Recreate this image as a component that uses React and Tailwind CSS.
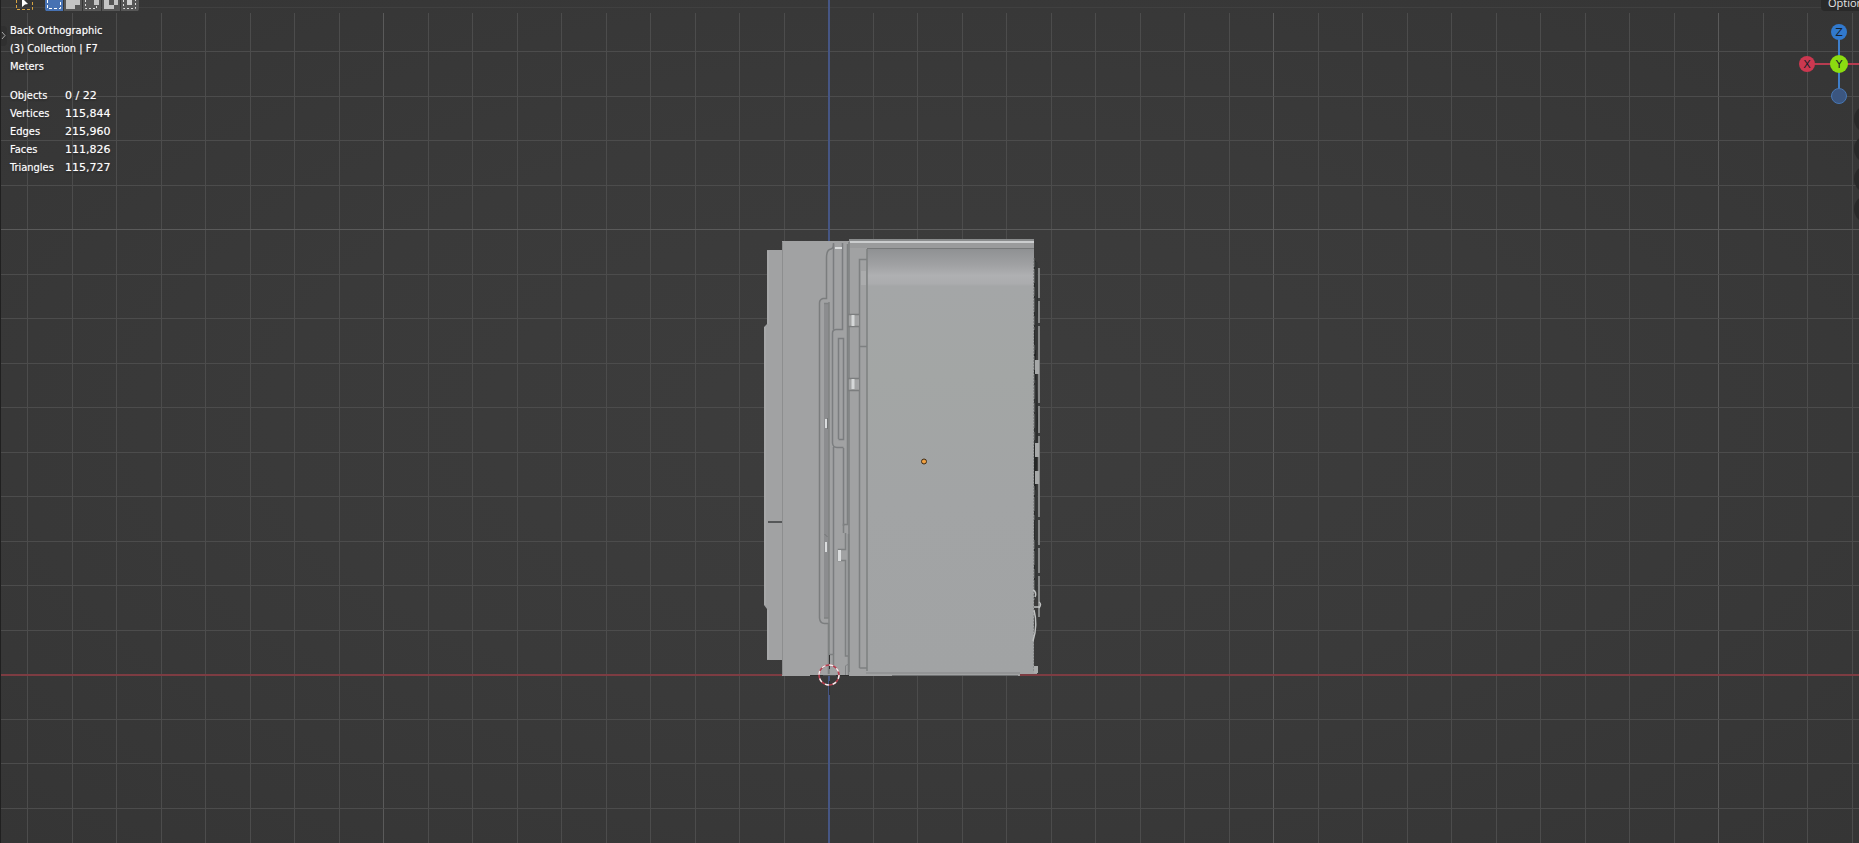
const S = 44.5;
const OX = 828.7;
const OY = 674.7;

const range = (a, b) => Array.from({ length: b - a + 1 }, (_, i) => a + i);

function Grid() {
  return (
    <g strokeWidth="1">
      <g shapeRendering="crispEdges">
        {range(-18, 60).map((i) => (
          <line key={"v" + i} x1={OX + i * S} x2={OX + i * S} y1="13" y2="2400" stroke={i % 10 === 0 ? "#5a5a5a" : "#4c4c4c"} />
        ))}
        {range(-14, 40).map((i) => (
          <line key={"h" + i} x1="0" x2="4000" y1={OY + i * S} y2={OY + i * S} stroke={i % 10 === 0 ? "#5a5a5a" : "#4c4c4c"} />
        ))}
        <line x1="0" x2="4000" y1="7.500" y2="7.500" stroke="#404040" />
      </g>
      <line x1="0" x2="4000" y1="675" y2="675" stroke="#7d3c42" strokeWidth="2" />
      <line x1="829" x2="829" y1="0" y2="2400" stroke="#465684" strokeWidth="2" />
    </g>
  );
}

function Model() {
  return (
    <g>
      {/* rear handle rail */}
      <path d="M1033 256L1036 262L1038 300L1036 360L1038 420L1036 500L1037 570L1034 600H1033Z" fill="#252727" />
      <path d="M1036 262V350M1035 380V445M1036 490V590" stroke="#343636" strokeWidth="3" fill="none" />
      <path d="M1034 258V330M1034 345V440M1034 486V520M1034 540V600" stroke="#7a7c7c" strokeDasharray="9 2 14 4" />
      <path d="M1039 268V617" stroke="#858787" strokeWidth="2" />
      <path d="M1039 298v3M1039 323v3M1039 403v3M1039 433v3M1039 517v3M1039 545v3M1039 573v3" stroke="#3b3d3d" strokeWidth="2" />
      <path d="M1035 360h4v14h-4zM1035 443h4v14h-4zM1035 471h4v13h-4z" fill="#a7a9a9" />

      {/* body silhouette */}
      <path d="M764 327L767 324V250H782V241H849V239H1034V671H1037V674H1020V676H782V660H767V609L764 605Z" fill="#a1a2a3" />
      <path d="M765 327V605M768 251V324M768 610V659" stroke="#adaeaf" fill="none" />
      <path d="M782.500 242V675" stroke="#8d8e8f" />

      {/* main panel */}
      <rect x="867" y="248" width="167" height="424" fill="url(#panel)" />
      <rect x="849" y="239" width="185" height="9" fill="#9a9b9c" />
      <path d="M849 240H1034" stroke="#8a8c8d" strokeWidth="2" />
      <path d="M850 242H1034" stroke="#cbcdce" strokeWidth="2" />
      <path d="M867 248.500H1034" stroke="#77797a" />
      <path d="M1033.500 258V672" stroke="#8a8c8d" strokeDasharray="2 1" />
      <g strokeWidth="1.500" stroke="#7e8081" fill="none">
        <path d="M867 249V671" />
        <path d="M859.500 668V259.500H867M859.500 668H867M860 346.500H867" />
      </g>
      <rect x="861" y="271" width="5" height="14" fill="#abacad" />
      <path d="M849 242V672" stroke="#868889" strokeWidth="2" fill="none" />
      <path d="M859 314.500H848V326.500H859M859 378.500H848V390.500H859" fill="#a3a4a5" stroke="#7b7d7e" strokeWidth="1.500" />
      <path d="M851.500 315h3v11h-3zM851.500 379h3v10h-3z" fill="#d5d7d8" />

      {/* pipes and seams */}
      <g strokeWidth="1.500">
        <path d="M833.500 244.500Q834 248.500 829.500 249.500Q826.500 251 826.500 258V298.500H823Q819.500 299.500 819.500 303V618Q820 623.500 824.500 623.500H828.500V674" stroke="#7b7d7e" fill="none" />
        <rect x="824" y="304" width="5" height="314" fill="#8c8d8f" />
        <path d="M829 302V674M824 303.500H829M824 618H829" stroke="#808283" fill="none" />
        <path d="M833.500 243V329.500M842.500 243V329.500H836Q832.500 330 832.500 333V443Q833 447.500 837 447.500H843.500M833.500 447V654M838.500 439V338.500H843.500V439.500H838.500M843.500 448V526" stroke="#7b7d7f" fill="none" />
        <path d="M847.500 244V524.500H843.500V533M848.500 534V675M845.500 533V549.500H838.500V560.500H845.500V656H848M829 654.500H833.500V665" stroke="#7e8081" fill="none" />
      </g>
      <path d="M845.500 676V666Q846 664.500 849 664.500" stroke="#808284" fill="none" />
      <path d="M835 247h7v2h-7zM825 419h2v9h-2zM825 542h2v10h-2zM838 550h3v11h-3z" fill="#dadcdd" />
      <path d="M827.500 418v11M824.500 534l3 3" stroke="#737576" fill="none" />
      <path d="M768 522H782" stroke="#555758" strokeWidth="2" />
      <path d="M866 673H1020" stroke="#858788" />
      <path d="M892 675.500H1018" stroke="#6f7172" />
      <path d="M810 675.500H849" stroke="#4f5152" />

      {/* lower right cable */}
      <path d="M1033 590Q1037 592 1035 597M1034 607H1039M1039 602q3 2 0 6M1034 610Q1038 625 1033 641" stroke="#bfc1c1" strokeWidth="1.500" fill="none" />
      <rect x="1034" y="666" width="4" height="7" fill="#aaacac" />
    </g>
  );
}

function Cursor3D() {
  return (
    <g fill="none">
      <path d="M829.500 655V669M829.500 681V695M810 675.500H823M836 675.500H849" stroke="#303030" />
      <circle cx="829" cy="675" r="10" stroke="#b73f50" strokeWidth="1.500" />
      <circle cx="829" cy="675" r="10" stroke="#f0f0f0" strokeWidth="1.500" strokeDasharray="4 3.850" />
    </g>
  );
}

function Scene() {
  return (
    <svg className="absolute inset-0 h-full w-full" aria-hidden="true">
      <defs>
        <linearGradient id="panel" x1="0" x2="0" y1="0" y2="1">
          <stop offset="0" stopColor="#8e9092" />
          <stop offset=".04" stopColor="#a0a1a3" />
          <stop offset=".065" stopColor="#afb0b2" />
          <stop offset=".084" stopColor="#abacae" />
          <stop offset=".09" stopColor="#a4a6a7" />
          <stop offset=".3" stopColor="#a3a6a5" />
          <stop offset=".6" stopColor="#a2a4a5" />
          <stop offset="1" stopColor="#a1a3a4" />
        </linearGradient>
      </defs>
      <Grid />
      <Model />
      <Cursor3D />
      <circle cx="924" cy="461.500" r="2.500" fill="#f0a040" stroke="#3d2a15" />
    </svg>
  );
}

const modes = [
  ["Set selection", "bg-[#4772b3]"],
  ["Extend selection", "bg-[#565656]"],
  ["Subtract selection", "bg-[#565656]"],
  ["Invert selection", "bg-[#565656]"],
  ["Intersect selection", "bg-[#565656]"],
];

const shapes = [
  <path key="a" d="M2.500 -5V8.500H15.500V-5" fill="none" stroke="#fff" strokeDasharray="3 2" />,
  <path key="b" d="M2 0H16V5H11V9H2Z" fill="#c4c4c4" />,
  <g key="c"><path d="M2.500 0V8.500H13.500V5" fill="none" stroke="#ddd" strokeDasharray="2 2" /><path d="M11 0H16V5H11Z" fill="#c4c4c4" /></g>,
  <path key="d" fillRule="evenodd" d="M2 0H16V5H12V9H2ZM7 0V5H12V0Z" fill="#c4c4c4" />,
  <g key="e"><path d="M2.500 0V8.500H14.500V0" fill="none" stroke="#ddd" strokeDasharray="2 2" /><path d="M6 0H11V5H6Z" fill="#d0d0d0" /></g>,
];

function Header() {
  return (
    <header className="flex h-3 items-start justify-between">
      <div className="flex pl-[15px]">
        <button aria-label="Select tool" className="h-3 w-[17px]">
          <svg width="17" height="12" aria-hidden="true">
            <path d="M.500 0V9.500H16.500V0" fill="none" stroke="#d6a443" strokeDasharray="3 2" />
            <path d="M6 0H8L12 4L9 4.500L6 7Z" fill="#fff" />
          </svg>
        </button>
        <div className="ml-3 flex gap-px overflow-hidden rounded-b">
          {modes.map(([label, bg], i) => (
            <button key={label} aria-label={label} className={`h-[11px] w-[18px] ${bg}`}>
              <svg width="18" height="11" aria-hidden="true">{shapes[i]}</svg>
            </button>
          ))}
        </div>
      </div>
      <button className="h-[11px] w-[38px] overflow-hidden rounded-bl bg-[#292929] pl-[7px] text-left text-[11px] text-[#e5e5e5]">
        <span className="-mt-[6px] block font-['Open_Sans',sans-serif] leading-4">Options</span>
      </button>
    </header>
  );
}

const stats = [
  ["Objects", "0 / 22"],
  ["Vertices", "115,844"],
  ["Edges", "215,960"],
  ["Faces", "111,826"],
  ["Triangles", "115,727"],
];

function Stats() {
  return (
    <section className="pl-[9px] pt-[10px] text-[11px] leading-[18px] text-white [text-shadow:0_0_1px_#fff8,0_1px_2px_#0008]">
      <p>Back Orthographic</p>
      <p>(3) Collection | F7</p>
      <p>Meters</p>
      <table className="mt-[11px] border-collapse">
        <tbody>
          {stats.map(([k, v]) => (
            <tr key={k}>
              <th scope="row" className="w-[55px] p-0 text-left font-normal">{k}</th>
              <td className="p-0 font-['DejaVu_Sans',sans-serif]">{v}</td>
            </tr>
          ))}
        </tbody>
      </table>
    </section>
  );
}

function Gizmo() {
  return (
    <svg className="absolute right-0 top-5 h-[90px] w-[64px]" aria-label="View axes" role="img">
      <path d="M12 44H64" stroke="#b73c50" strokeWidth="2" />
      <path d="M44 12V76" stroke="#3f7fca" strokeWidth="2" />
      <circle cx="12" cy="44" r="8" fill="#cb3850" />
      <circle cx="44" cy="12" r="8" fill="#3179cd" />
      <circle cx="44" cy="44" r="9" fill="#8bdc10" />
      <circle cx="44" cy="76" r="7.500" fill="#3b5680" stroke="#4777b5" />
      <g fontFamily="DejaVu Sans" fontSize="11" textAnchor="middle" fill="#16202a">
        <text x="12" y="48">X</text>
        <text x="44" y="16">Z</text>
        <text x="44" y="48">Y</text>
      </g>
    </svg>
  );
}

export default function App() {
  return (
    <main className="relative min-h-screen overflow-hidden border-l border-[#202020] bg-[radial-gradient(ellipse_at_center,#3d3d3d_0%,#3a3a3a_50%,#353535_100%)] font-['DejaVu_Sans_Condensed','Open_Sans',sans-serif]">
      <div className="absolute inset-y-0 -left-px right-0"><Scene /></div>
      <div className="relative">
        <Header />
        <Stats />
      </div>
      <button aria-label="Show toolbar" className="absolute left-0 top-[26px] h-5 w-[6px] rounded-r bg-[#303030]">
        <svg width="6" height="20" aria-hidden="true"><path d="M1 6L4 9.500L1 13" fill="none" stroke="#aaa" /></svg>
      </button>
      <Gizmo />
      <nav className="absolute -right-[23px] top-[105px] flex flex-col gap-[2px]" aria-label="Navigation">
        {["Zoom", "Pan", "Camera view", "Perspective"].map((n) => (
          <button key={n} aria-label={n} className="size-7 rounded-full bg-[#292929]" />
        ))}
      </nav>
    </main>
  );
}
